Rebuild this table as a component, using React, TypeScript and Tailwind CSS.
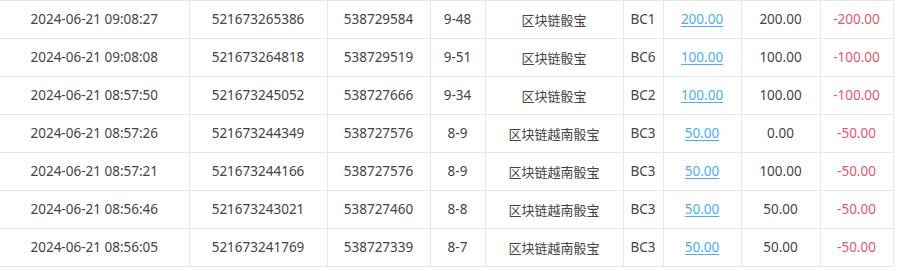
import React from "react";

interface Row {
  time: string;
  orderNo: string;
  userId: string;
  issue: string;
  game: string;
  table: string;
  bet: string;
  valid: string;
  win: string;
}

const ROWS: Row[] = [
  { time: "2024-06-21 09:08:27", orderNo: "521673265386", userId: "538729584", issue: "9-48", game: "区块链骰宝", table: "BC1", bet: "200.00", valid: "200.00", win: "-200.00" },
  { time: "2024-06-21 09:08:08", orderNo: "521673264818", userId: "538729519", issue: "9-51", game: "区块链骰宝", table: "BC6", bet: "100.00", valid: "100.00", win: "-100.00" },
  { time: "2024-06-21 08:57:50", orderNo: "521673245052", userId: "538727666", issue: "9-34", game: "区块链骰宝", table: "BC2", bet: "100.00", valid: "100.00", win: "-100.00" },
  { time: "2024-06-21 08:57:26", orderNo: "521673244349", userId: "538727576", issue: "8-9", game: "区块链越南骰宝", table: "BC3", bet: "50.00", valid: "0.00", win: "-50.00" },
  { time: "2024-06-21 08:57:21", orderNo: "521673244166", userId: "538727576", issue: "8-9", game: "区块链越南骰宝", table: "BC3", bet: "50.00", valid: "100.00", win: "-50.00" },
  { time: "2024-06-21 08:56:46", orderNo: "521673243021", userId: "538727460", issue: "8-8", game: "区块链越南骰宝", table: "BC3", bet: "50.00", valid: "50.00", win: "-50.00" },
  { time: "2024-06-21 08:56:05", orderNo: "521673241769", userId: "538727339", issue: "8-7", game: "区块链越南骰宝", table: "BC3", bet: "50.00", valid: "50.00", win: "-50.00" },
];

const cell = "h-[38px] p-0 text-center align-middle border-r border-b border-[#e8e8e8]";

export default function App() {
  return (
    <div className="w-[900px] h-[271px] overflow-hidden bg-white font-['Noto_Sans','Noto_Sans_CJK_SC',sans-serif] text-[13.5px] text-[#444]">
      <table className="w-[893px] table-fixed border-collapse border-t border-[#e8e8e8]">
        <colgroup>
          <col className="w-[189px]" />
          <col className="w-[138px]" />
          <col className="w-[103px]" />
          <col className="w-[55px]" />
          <col className="w-[138px]" />
          <col className="w-[40px]" />
          <col className="w-[78px]" />
          <col className="w-[79px]" />
          <col className="w-[73px]" />
        </colgroup>
        <tbody>
          {ROWS.map((r) => (
            <tr key={r.orderNo}>
              <td className={cell}>{r.time}</td>
              <td className={cell}>{r.orderNo}</td>
              <td className={cell}>{r.userId}</td>
              <td className={cell}>{r.issue}</td>
              <td className={cell + " font-['Noto_Sans_CJK_SC',sans-serif] text-[13px]"}>{r.game}</td>
              <td className={cell}>{r.table}</td>
              <td className={cell}>
                <a className="text-[#4ab0ee] underline underline-offset-2 cursor-pointer">{r.bet}</a>
              </td>
              <td className={cell}>{r.valid}</td>
              <td className={cell + " text-[#e8566c]"}>{r.win}</td>
            </tr>
          ))}
        </tbody>
      </table>
    </div>
  );
}
